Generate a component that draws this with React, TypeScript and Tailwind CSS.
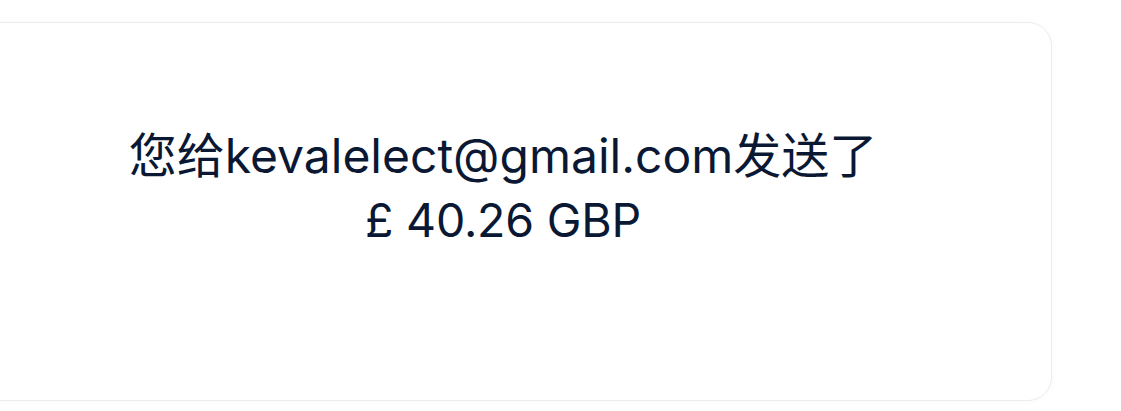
export default function App() {
  return (
    <div className="h-[411px] w-[1121px] overflow-hidden bg-white pt-[22px]">
      <div className="ml-[-46px] flex h-[379px] w-[1098px] flex-col items-center rounded-[24px] border border-[#ececec] bg-white pt-[100px] shadow-[0_0_10px_rgba(0,0,0,0.025)]">
        <div
          className="text-center leading-[65px] text-[#0a1833]"
          style={{ fontFamily: 'Inter, "Noto Sans CJK SC", sans-serif' }}
        >
          <p className="whitespace-nowrap text-[48px]">您给kevalelect@gmail.com发送了</p>
          <p className="text-[46.5px] tracking-[-0.2px]">£ 40.26 GBP</p>
        </div>
      </div>
    </div>
  );
}
